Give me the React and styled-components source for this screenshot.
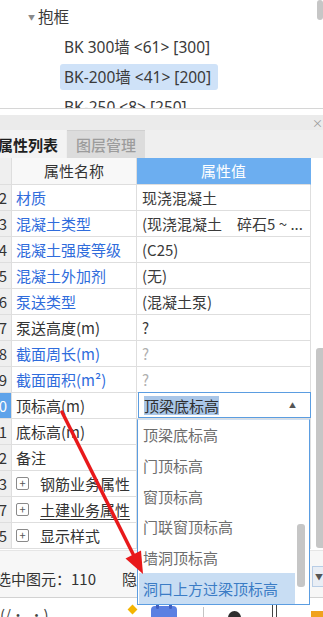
import React from "react";
import styled, { createGlobalStyle } from "styled-components";

const GlobalStyle = createGlobalStyle`
  html, body {
    margin: 0;
    padding: 0;
    background: #fff;
  }
  body {
    font-family: "Noto Sans CJK SC", "Noto Sans", sans-serif;
    overflow: hidden;
  }
  * {
    box-sizing: border-box;
  }
`;

const Screen = styled.div`
  position: relative;
  width: 323px;
  height: 617px;
  overflow: hidden;
  background: #fff;
  color: #333;
  font-size: 15px;
`;

/* ---------- tree ---------- */
const TreePanel = styled.div`
  display: flex;
  height: 109px;
  border-bottom: 1px solid #d6d6d6;
  overflow: hidden;
`;

const TreeList = styled.ul`
  flex: 1;
  margin: 0;
  padding: 2px 0 0;
  list-style: none;
  font-family: "Noto Sans", "Noto Sans CJK SC", sans-serif;
  font-size: 15.5px;
`;

const TreeRow = styled.li`
  display: flex;
  align-items: center;
  height: 30px;
  padding-left: ${(p) => p.$indent}px;
  white-space: nowrap;
`;

const Caret = styled.span`
  width: 10px;
  font-size: 7px;
  color: #8a8a8a;
`;

const TreeLabel = styled.span`
  padding: 0 7px 0 4px;
  line-height: 26px;
  border-radius: 3px;
  color: #3a3a3a;
  background: ${(p) => (p.$selected ? "#cfe2f8" : "transparent")};
`;

const TreeScroll = styled.div`
  width: 6px;
`;

const Thumb = styled.div`
  width: ${(p) => p.$w || 6}px;
  height: ${(p) => p.$h}px;
  background: #c6c6c6;
  border-radius: 3px;
`;

/* ---------- lower panel ---------- */
const LowerPanel = styled.div`
  margin-top: 6px;
  margin-left: -20px;
  width: 343px;
`;

const TitleBar = styled.div`
  display: flex;
  justify-content: flex-end;
  align-items: center;
  height: 15px;
  background: #ebebeb;
  font-size: 11px;
  color: #999;
`;

const TabStrip = styled.div`
  display: flex;
  height: 28px;
  padding-left: 10px;
  background: #efefef;
`;

const Tab = styled.div`
  display: flex;
  align-items: center;
  padding: 0 ${(p) => (p.$active ? 8 : 9)}px;
  margin-left: ${(p) => (p.$active ? 0 : 1)}px;
  background: ${(p) => (p.$active ? "#f3f3f3" : "#dcdcdc")};
  color: ${(p) => (p.$active ? "#1f1f1f" : "#9c9c9c")};
  font-weight: ${(p) => (p.$active ? 700 : 500)};
  border-top: 1px solid ${(p) => (p.$active ? "#f3f3f3" : "#d0d0d0")};
`;

const TableArea = styled.div`
  display: flex;
  align-items: flex-start;
`;

const Grid = styled.div`
  display: grid;
  grid-template-columns: 32px 125px 174px;
  grid-auto-rows: 26px;
  grid-template-rows: 27px;
`;

const Cell = styled.div`
  position: relative;
  display: flex;
  align-items: center;
  border-right: 1px solid #dedede;
  border-bottom: 1px solid #dedede;
  white-space: nowrap;
  line-height: 20px;
`;

const NumCell = styled(Cell)`
  justify-content: flex-end;
  padding-right: 4px;
  background: ${(p) => (p.$active ? "#5ea3ea" : "#efefef")};
  color: ${(p) => (p.$active ? "#fff" : "#333")};
`;

const HeadCell = styled(Cell)`
  justify-content: center;
  background: ${(p) => (p.$accent ? "#6caef0" : "#f8f8f8")};
  color: ${(p) => (p.$accent ? "#fff" : "#333")};
  border-right-color: ${(p) => (p.$accent ? "#6caef0" : "#dedede")};
`;

const NameCell = styled(Cell)`
  padding-left: 4px;
  color: ${(p) => (p.$link ? "#2f6cdc" : "#333")};
`;

const ValueCell = styled(Cell)`
  padding-left: 5px;
  color: ${(p) => (p.$muted ? "#b0b0b0" : "#3a3a3a")};
`;

const PlusBox = styled.span`
  display: inline-flex;
  align-items: center;
  justify-content: center;
  width: 13px;
  height: 13px;
  margin-right: 11px;
  border: 1px solid #8a8a8a;
  border-radius: 2px;
  font-size: 11px;
  line-height: 1;
  color: #555;
`;

const GroupText = styled.span`
  color: #333;
  text-decoration: ${(p) => (p.$underline ? "underline" : "none")};
  text-underline-offset: 3px;
`;

const Combo = styled.div`
  position: absolute;
  inset: -1px -1px 0 1px;
  display: flex;
  align-items: center;
  justify-content: space-between;
  padding: 0 14px 0 5px;
  border: 1px solid #5b9de1;
  background: #fff;
`;

const Picked = styled.span`
  background: #a9c6e8;
  color: #2f2f2f;
  line-height: 19px;
`;

const ComboCaret = styled.span`
  font-size: 7px;
  color: #555;
`;

const DropList = styled.div`
  position: absolute;
  top: 26px;
  left: 0;
  width: 173px;
  height: 186px;
  display: flex;
  border: 1px solid #5b9de1;
  border-top-color: #cfe0f3;
  background: #fff;
  z-index: 5;
`;

const DropItems = styled.div`
  flex: 1;
  display: flex;
  flex-direction: column;
`;

const DropItem = styled.div`
  display: flex;
  align-items: center;
  height: 31px;
  padding-left: 4px;
  margin-left: 1px;
  color: ${(p) => (p.$hot ? "#3b7cc5" : "#6d6d6d")};
  background: ${(p) => (p.$hot ? "#c8ddf3" : "transparent")};
`;

const DropScroll = styled.div`
  width: 14px;
  padding: 104px 4px 0 2px;
`;

const TableScroll = styled.div`
  width: 12px;
  padding: 190px 0 0 5px;
`;

const StatusBar = styled.div`
  display: flex;
  align-items: center;
  height: 48px;
  margin-top: 1px;
  padding: 9px 0 0 16px;
  background: #f7f7f7;
  border-top: 1px solid #e6e6e6;
  border-bottom: 1px solid #d2d2d2;
  color: #333;
  white-space: nowrap;
`;

const StatusText = styled.span`
  margin-right: ${(p) => p.$gap || 0}px;
`;

const StatusSelect = styled.div`
  margin-left: auto;
  display: flex;
  align-items: center;
  justify-content: flex-end;
  width: 11px;
  height: 21px;
  margin-bottom: 4px;
  background: #e9eef5;
  border: 1px solid #b8cde6;
  border-right: none;
  font-size: 8px;
  color: #555;
`;

const BottomBar = styled.div`
  display: flex;
  align-items: flex-start;
  height: 20px;
  overflow: hidden;
  white-space: nowrap;
`;

const Face = styled.span`
  margin-top: 7px;
  margin-right: 80px;
  font-size: 15px;
  line-height: 20px;
  color: #444;
`;

const Diamond = styled.span`
  width: 7px;
  height: 7px;
  margin-top: 8px;
  transform: rotate(45deg);
  background: #f4b400;
`;

const Divider = styled.span`
  width: 1px;
  height: 12px;
  margin-top: 9px;
  background: #c4c4c4;
`;

const Dot = styled.span`
  width: 13px;
  height: 13px;
  margin-top: 13px;
  border-radius: 50%;
  background: #2d2d2d;
`;

const Bars = styled.span`
  display: flex;
  gap: 3px;
  margin-top: 6px;
  span {
    width: 1px;
    height: 14px;
    background: #444;
  }
`;

const OrangeChip = styled.span`
  width: 12px;
  height: 8px;
  margin-top: 13px;
  margin-left: auto;
  background: #f0a21e;
`;

const Overlay = styled.svg`
  position: absolute;
  left: 0;
  top: 0;
  pointer-events: none;
  z-index: 10;
`;

const rows = [
  { n: 2, name: "材质", link: true, value: "现浇混凝土" },
  { n: 3, name: "混凝土类型", link: true, value: "(现浇混凝土　碎石5 ~ ..." },
  { n: 4, name: "混凝土强度等级", link: true, value: "(C25)" },
  { n: 5, name: "混凝土外加剂", link: true, value: "(无)" },
  { n: 6, name: "泵送类型", link: true, value: "(混凝土泵)" },
  { n: 7, name: "泵送高度(m)", value: "?" },
  { n: 8, name: "截面周长(m)", link: true, value: "?", muted: true },
  { n: 9, name: "截面面积(m²)", link: true, value: "?", muted: true },
  { n: 10, name: "顶标高(m)", combo: true },
  { n: 11, name: "底标高(m)" },
  { n: 12, name: "备注" },
  { n: 13, name: "钢筋业务属性", group: true },
  { n: 17, name: "土建业务属性", group: true, underline: true },
  { n: 25, name: "显示样式", group: true },
];

const options = ["顶梁底标高", "门顶标高", "窗顶标高", "门联窗顶标高", "墙洞顶标高", "洞口上方过梁顶标高"];

function CalendarIcon() {
  return (
    <svg width="28" height="20" viewBox="0 0 28 20" style={{ marginLeft: 14, marginTop: 4 }}>
      <rect x="1" y="4" width="26" height="18" rx="4" fill="#5b80e2" />
      <rect x="6" y="1" width="3" height="6" rx="1.5" fill="#3f5fc0" />
      <rect x="19" y="1" width="3" height="6" rx="1.5" fill="#3f5fc0" />
    </svg>
  );
}

function Arrow() {
  return (
    <Overlay width="323" height="617" viewBox="0 0 323 617">
      <line x1="62" y1="412" x2="133.5" y2="555" stroke="#e8191b" strokeWidth="3.5" strokeLinecap="round" />
      <polygon points="143,574 125.5,558.5 141,550.5" fill="#e8191b" />
    </Overlay>
  );
}

export default function App() {
  return (
    <>
      <GlobalStyle />
      <Screen>
        <TreePanel>
          <TreeList>
            <TreeRow $indent={28}>
              <Caret>▼</Caret>
              <TreeLabel style={{ paddingLeft: 0 }}>抱框</TreeLabel>
            </TreeRow>
            <TreeRow $indent={60}>
              <TreeLabel>BK 300墙 &lt;61&gt; [300]</TreeLabel>
            </TreeRow>
            <TreeRow $indent={60}>
              <TreeLabel $selected>BK-200墙 &lt;41&gt; [200]</TreeLabel>
            </TreeRow>
            <TreeRow $indent={60}>
              <TreeLabel>BK-250 &lt;8&gt; [250]</TreeLabel>
            </TreeRow>
          </TreeList>
          <TreeScroll>
            <Thumb $h={20} />
          </TreeScroll>
        </TreePanel>

        <LowerPanel>
          <TitleBar>×</TitleBar>
          <TabStrip>
            <Tab $active>属性列表</Tab>
            <Tab>图层管理</Tab>
          </TabStrip>

          <TableArea>
            <Grid>
              <NumCell />
              <HeadCell>属性名称</HeadCell>
              <HeadCell $accent>属性值</HeadCell>
              {rows.map((r) => (
                <React.Fragment key={r.n}>
                  <NumCell $active={r.combo}>{r.n}</NumCell>
                  <NameCell $link={r.link}>
                    {r.group ? (
                      <>
                        <PlusBox>+</PlusBox>
                        <GroupText $underline={r.underline}>{r.name}</GroupText>
                      </>
                    ) : (
                      r.name
                    )}
                  </NameCell>
                  <ValueCell $muted={r.muted}>
                    {r.combo ? (
                      <>
                        <Combo>
                          <Picked>顶梁底标高</Picked>
                          <ComboCaret>▲</ComboCaret>
                        </Combo>
                        <DropList>
                          <DropItems>
                            {options.map((o, i) => (
                              <DropItem key={o} $hot={i === options.length - 1}>
                                {o}
                              </DropItem>
                            ))}
                          </DropItems>
                          <DropScroll>
                            <Thumb $w={8} $h={63} />
                          </DropScroll>
                        </DropList>
                      </>
                    ) : (
                      r.value
                    )}
                  </ValueCell>
                </React.Fragment>
              ))}
            </Grid>
            <TableScroll>
              <Thumb $w={9} $h={200} />
            </TableScroll>
          </TableArea>

          <StatusBar>
            <StatusText $gap={26}>选中图元：110</StatusText>
            <StatusText>隐藏构件</StatusText>
            <StatusSelect>▼</StatusSelect>
          </StatusBar>

          <BottomBar>
            <Face style={{ marginLeft: 20 }}>(/ ˙ . ˙ )</Face>
            <Diamond />
            <CalendarIcon />
            <Divider style={{ marginLeft: 25 }} />
            <Dot style={{ marginLeft: 24 }} />
            <Bars style={{ marginLeft: 31 }}>
              <span />
              <span />
            </Bars>
            <OrangeChip />
          </BottomBar>
        </LowerPanel>
        <Arrow />
      </Screen>
    </>
  );
}
